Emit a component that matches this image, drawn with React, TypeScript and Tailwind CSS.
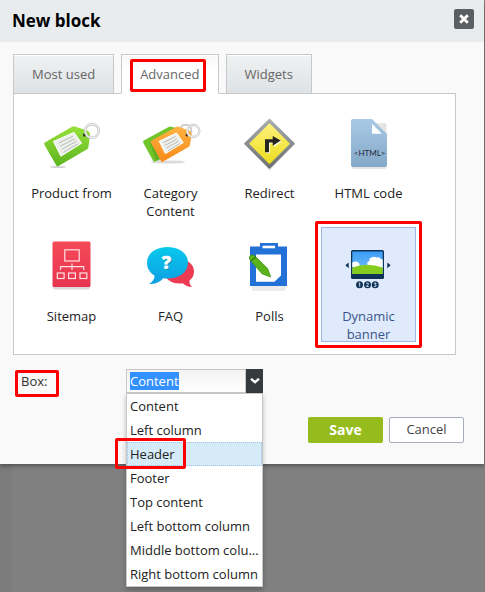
import { ReactNode, useEffect, useRef, useState } from "react";
import { twMerge } from "tailwind-merge";

interface Block {
  name: string;
  icon: ReactNode;
  marked?: boolean;
}

const tabs = ["Most used", "Advanced", "Widgets"];

const boxes = [
  "Content",
  "Left column",
  "Header",
  "Footer",
  "Top content",
  "Left bottom column",
  "Middle bottom colu...",
  "Right bottom column",
];

// --- icons ---

function Icon({ children }: { children: ReactNode }) {
  return (
    <svg
      viewBox="0 0 64 64"
      className="size-16 shrink-0"
      aria-hidden="true"
    >
      {children}
    </svg>
  );
}

function ProductIcon() {
  return (
    <Icon>
      <defs>
        <linearGradient id="tagGreen" x1="0" y1="0" x2="0" y2="1">
          <stop offset="0" stopColor="#97e03a" />
          <stop offset="1" stopColor="#5cb51f" />
        </linearGradient>
      </defs>
      <ellipse cx="18" cy="56" rx="8" ry="1" fill="#000" opacity=".18" />
      <path
        d="M4.8 31.5 32 15.8Q33.5 15 35 15.5L47 19.6Q50.2 21 50 24L48.4 36.2Q48.2 37.6 47 38.3L18.5 55Q17 55.8 16.2 54.3L4.5 34Q3.6 32.4 4.8 31.5Z"
        fill="url(#tagGreen)"
      />
      <path d="M13.5 30.4 34 21.4 41.6 32.2 20.9 45.2Z" fill="#eef0ed" stroke="#fff" />
      <path
        d="M18.5 32.2 33 25.2M20.2 35.3 34.8 27.7M21.8 38.4 36.6 30.2M23.6 41.4 38 32.8"
        stroke="#a9ada9"
        strokeWidth=".8"
        fill="none"
      />
      <circle cx="44.5" cy="24" r="1.7" fill="#29411b" />
      <circle cx="52" cy="20" r="6.8" fill="none" stroke="#c3c3c3" strokeWidth="2.4" />
      <circle cx="52" cy="20" r="6.8" fill="none" stroke="#ededed" strokeWidth="1.2" />
    </Icon>
  );
}

function CategoryIcon() {
  return (
    <Icon>
      <defs>
        <linearGradient id="tagOrange" x1="0" y1="0" x2="0" y2="1">
          <stop offset="0" stopColor="#ffb341" />
          <stop offset="1" stopColor="#f88a1b" />
        </linearGradient>
      </defs>
      <ellipse cx="29" cy="51" rx="17" ry="1.6" fill="#000" opacity=".14" />
      <circle cx="46.5" cy="19.5" r="5.8" fill="none" stroke="#cdcdcd" strokeWidth="2" />
      <path
        d="M4.8 29.6 29.6 16Q31 15.3 32.5 15.8L42 19 40 38 16 50.6Q14.8 51.2 14.2 50L4.4 32Q3.5 30.4 4.8 29.6Z"
        fill="#70c52a"
      />
      <path
        d="M11 32 36 16 37 20 16 34 22 49 17 50Z"
        fill="#4d9e16"
        opacity=".5"
      />
      <path
        d="M12.5 29.6 37 16Q38.4 15.2 39.8 15.8L50 19.4Q53 20.6 52.6 24L50.9 34Q50.7 35.3 49.5 36L24.2 50.6Q22.8 51.4 22 50L12 32Q11.2 30.4 12.5 29.6Z"
        fill="url(#tagOrange)"
      />
      <path d="M20.2 30.2 37.6 22 44.2 31.6 26.4 42.6Z" fill="#eef0ed" stroke="#fff" />
      <path
        d="M24.2 31.8 36.6 25.4M25.8 34.6 38.2 27.8M27.4 37.2 39.8 30M29 39.8 41 32.4"
        stroke="#a9ada9"
        strokeWidth=".8"
        fill="none"
      />
      <circle cx="48" cy="24" r="1.5" fill="#4c3415" />
      <circle cx="54.3" cy="20" r="6" fill="none" stroke="#c3c3c3" strokeWidth="2.4" />
      <circle cx="54.3" cy="20" r="6" fill="none" stroke="#ededed" strokeWidth="1.2" />
    </Icon>
  );
}

function RedirectIcon() {
  return (
    <Icon>
      <defs>
        <linearGradient id="signEdge" x1="0" y1="0" x2="0" y2="1">
          <stop offset="0" stopColor="#a9acae" />
          <stop offset="1" stopColor="#6d7072" />
        </linearGradient>
        <linearGradient id="signFace" x1="0" y1="0" x2="0" y2="1">
          <stop offset="0" stopColor="#fff37c" />
          <stop offset="1" stopColor="#ecdc1e" />
        </linearGradient>
      </defs>
      <path d="M31.5 12 54 35 31.5 60 9 35Z" fill="#000" opacity=".1" />
      <path
        d="M31.5 9 55.5 32.7 31.5 56.5 7.5 32.7Z"
        fill="url(#signEdge)"
        stroke="url(#signEdge)"
        strokeWidth="2.4"
        strokeLinejoin="round"
      />
      <path d="M31.5 12.2 52 32.7 31.5 53.2 11 32.7Z" fill="url(#signFace)" />
      <path d="M28 42.3V29.5H36V26.2L43.7 30.8 36 36V32.5H32V42.3Z" fill="#fff" opacity=".8" />
      <path d="M27 41.3V28.3H34.7V25L42.7 29.6 34.7 34.8V31.6H31V41.3Z" fill="#26251f" />
    </Icon>
  );
}

function HtmlIcon() {
  return (
    <Icon>
      <defs>
        <linearGradient id="page" x1="0" y1="0" x2="0" y2="1">
          <stop offset="0" stopColor="#a9cae6" />
          <stop offset="1" stopColor="#84a8c8" />
        </linearGradient>
      </defs>
      <rect x="15" y="12" width="34.5" height="46" rx="2" fill="#000" opacity=".1" />
      <path
        d="M16 8H35L50 23V54Q50 56 48 56H16Q14 56 14 54V10Q14 8 16 8Z"
        fill="url(#page)"
      />
      <path d="M35 12.7V22.7H44.9Z" fill="#fff" />
      <text
        x="32.7"
        y="45.2"
        textAnchor="middle"
        fontSize="8"
        fill="#1c2c3b"
        className="font-[Lato,sans-serif]"
      >
        &lt;HTML&gt;
      </text>
    </Icon>
  );
}

function SitemapIcon() {
  return (
    <Icon>
      <defs>
        <linearGradient id="sitemapRed" x1="0" y1="0" x2="0" y2="1">
          <stop offset="0" stopColor="#f44a58" />
          <stop offset="1" stopColor="#e93450" />
        </linearGradient>
      </defs>
      <rect x="13" y="10" width="37" height="45.5" rx="2" fill="#000" opacity=".15" />
      <rect x="12.5" y="7.5" width="38" height="45.5" rx="1.5" fill="url(#sitemapRed)" />
      <g fill="none" stroke="#ffe1e3" strokeWidth="1.2">
        <rect x="24.8" y="15.8" width="14.4" height="11.2" />
        <path d="M32 29.5V36M20.5 36V32.7H43.7V36" />
        <rect x="17.3" y="39" width="6.8" height="5.5" />
        <rect x="28.6" y="39" width="6.8" height="5.5" />
        <rect x="40" y="39" width="6.8" height="5.5" />
      </g>
    </Icon>
  );
}

function FaqIcon() {
  return (
    <Icon>
      <defs>
        <linearGradient id="bubble" x1="0" y1="0" x2="0" y2="1">
          <stop offset="0" stopColor="#08c8ec" />
          <stop offset="1" stopColor="#0d9fe2" />
        </linearGradient>
      </defs>
      <path
        d="M39 25C49 25 55 30.5 55 37.5C55 41.5 53.3 44.5 50.5 46.6C50.2 49 51 51.3 53 53C49.5 52.8 46 51.5 43.7 49.2C36 50.6 28 47 26 41.5Z"
        fill="#ec3b52"
      />
      <path
        d="M28.5 13C40.5 13 49 19.5 49 28.7C49 38 40.5 44.5 28.5 44.5C27 44.5 25.5 44.4 24.2 44.2C21 48.2 16 50.3 10.3 50C13.6 47.8 15.4 45 15.6 41.7C10.8 38.8 8 34.2 8 28.7C8 19.5 16.5 13 28.5 13Z"
        fill="url(#bubble)"
      />
      <text
        x="28.5"
        y="36"
        textAnchor="middle"
        fontSize="18"
        fontWeight="800"
        fill="#045d80"
        opacity=".5"
        className="font-['Open_Sans',sans-serif]"
      >
        ?
      </text>
      <text
        x="27.5"
        y="35"
        textAnchor="middle"
        fontSize="18"
        fontWeight="800"
        fill="#fff"
        stroke="#fff"
        strokeWidth=".5"
        className="font-['Open_Sans',sans-serif]"
      >
        ?
      </text>
    </Icon>
  );
}

function PollsIcon() {
  return (
    <Icon>
      <rect x="14" y="16" width="34" height="41" rx="2" fill="#000" opacity=".08" />
      <path d="M12 12.5H22V9H40V12.5H49V52H12Z" fill="#2171d6" />
      <path d="M24.5 11.7H37V14.3H24.5Z" fill="#fff" />
      <path d="M18 20.5H43V41.5L36.5 47.8H18Z" fill="#fff" />
      <path
        d="M11.6 25.2Q10.8 22.6 12.8 21.4Q15 20.3 17 22.2L29.6 34.4 32.7 43 24 39.8 13.8 28Z"
        fill="#5bb51b"
        stroke="#3f8f12"
        strokeWidth=".8"
        strokeLinejoin="round"
      />
      <path d="M13 27 18 22.8" stroke="#2f7a0c" strokeWidth="1.2" />
      <path d="M17 28.6 26.6 38.6M19.5 27 29 36.6" stroke="#48a013" strokeWidth=".6" />
    </Icon>
  );
}

function BannerIcon() {
  return (
    <Icon>
      <defs>
        <linearGradient id="sky" x1="0" y1="0" x2="0" y2="1">
          <stop offset="0" stopColor="#3a9cf5" />
          <stop offset="1" stopColor="#7fc4fb" />
        </linearGradient>
      </defs>
      <rect x="14" y="16" width="33" height="29" rx="1.5" fill="#0f3358" />
      <rect x="15.3" y="17.5" width="30.4" height="22.5" fill="url(#sky)" />
      <path
        d="M30.5 31Q29.5 27.5 32.5 27Q31.8 23.5 35 23.5Q37 21.8 39.5 23.5Q43 22.5 43.5 25L45.7 25.5V34H30.5ZM15.3 28.5Q20.5 25.8 22.5 30V33H15.3Z"
        fill="#fff"
      />
      <path d="M15.3 33.5Q30 28 45.7 33.5V40H15.3Z" fill="#84cc1d" />
      <path d="M8.3 31.3 11.7 28.5V34.3ZM53.7 31.3 50.3 28.5V34.3Z" fill="#0f3358" />
      <g fill="#0f3358">
        <circle cx="22.5" cy="50.7" r="3.5" />
        <circle cx="30.5" cy="50.7" r="3.5" />
        <circle cx="38.2" cy="50.7" r="3.5" />
      </g>
      <path
        d="M21.8 49.4 22.7 48.8V52.8M29.3 49.3Q32 48.3 31.3 50.3L29.3 52.4H31.8M37 49.1H39.2L38 50.5Q40 51 38.8 52.3L37 52.5"
        stroke="#dfebfd"
        strokeWidth=".9"
        fill="none"
      />
    </Icon>
  );
}

const blocks: Block[] = [
  { name: "Product from", icon: <ProductIcon /> },
  { name: "Category Content", icon: <CategoryIcon /> },
  { name: "Redirect", icon: <RedirectIcon /> },
  { name: "HTML code", icon: <HtmlIcon /> },
  { name: "Sitemap", icon: <SitemapIcon /> },
  { name: "FAQ", icon: <FaqIcon /> },
  { name: "Polls", icon: <PollsIcon /> },
  { name: "Dynamic banner", icon: <BannerIcon />, marked: true },
];

// red frame that points out a step
function Marker({ className }: { className?: string }) {
  return (
    <span
      className={twMerge(
        "pointer-events-none absolute z-20 rounded-[2px] border-3 border-[#ff0000]",
        className,
      )}
    />
  );
}

function Tabs({ active, onChange }: { active: string; onChange: (tab: string) => void }) {
  return (
    <div
      role="tablist"
      className="flex gap-[7px]"
    >
      {tabs.map((tab) => (
        <button
          key={tab}
          type="button"
          role="tab"
          aria-selected={tab === active}
          onClick={() => onChange(tab)}
          className={twMerge(
            "relative h-10 border border-[#c8c8c8] bg-linear-to-b from-[#eff1f2] to-[#dfe3e5] px-[18px] pt-0.5 text-[#666666] shadow-[inset_0_1px_0_#ffffff]",
            tab === active && "z-10 border-b-white from-[#f6f6f6] to-white to-40%",
          )}
        >
          {tab}
          {tab === "Advanced" && <Marker className="top-1 right-3 bottom-px left-2" />}
        </button>
      ))}
    </div>
  );
}

function BlockGrid({ selected, onSelect }: { selected: string; onSelect: (name: string) => void }) {
  return (
    <div className="-mt-px border border-[#c8c8c8] bg-white px-2.5 pt-2.5 pb-3">
      <div className="flex flex-wrap gap-x-1 gap-y-2">
        {blocks.map(({ name, icon, marked }) => (
          <button
            key={name}
            type="button"
            aria-pressed={name === selected}
            onClick={() => onSelect(name)}
            className={twMerge(
              "relative flex h-[115px] w-[95px] flex-col items-center gap-[9px] border border-transparent px-1 pt-1.5 leading-[18px] text-[#222222]",
              name === selected && "border-[#9db8e6] bg-[#dfebfd] text-[#3a5488]",
            )}
          >
            {icon}
            <span>{name}</span>
            {marked && <Marker className="-inset-[7px]" />}
          </button>
        ))}
      </div>
    </div>
  );
}

function BoxSelect() {
  const inputRef = useRef<HTMLInputElement>(null);
  const [value, setValue] = useState("Content");
  const [hovered, setHovered] = useState("Header");
  const [open, setOpen] = useState(true);

  useEffect(function selectValueOnOpen() {
    inputRef.current?.focus();
    inputRef.current?.select();
  }, []);

  function handlePick(box: string) {
    setValue(box);
    setOpen(false);
  }

  return (
    <div className="relative flex h-6 w-[137px]">
      <input
        ref={inputRef}
        id="box"
        role="combobox"
        aria-expanded={open}
        aria-controls="box-list"
        value={value}
        onChange={(e) => setValue(e.target.value)}
        className="min-w-0 flex-1 border border-[#c8c8c8] bg-linear-to-b from-[#f3f3f3] to-white px-[3px] leading-[18px] text-[#222222] outline-none selection:bg-[#3390ff] selection:text-white"
      />
      <button
        type="button"
        aria-label="Show boxes"
        onClick={() => setOpen(!open)}
        className="flex w-[17px] items-center justify-center bg-[#353a3e]"
      >
        <svg
          viewBox="0 0 10 6"
          className="h-1.5 w-2.5"
        >
          <path d="M1 .8 5 4.2 9 .8" fill="none" stroke="#fff" strokeWidth="2.4" />
        </svg>
      </button>
      {open && (
        <ul
          id="box-list"
          role="listbox"
          aria-label="Box"
          className="absolute inset-x-0 top-6 z-10 border border-[#c8c8c8] bg-white shadow-[0_3px_5px_rgba(0,0,0,0.25)]"
        >
          {boxes.map((box) => (
            <li
              key={box}
              role="option"
              aria-selected={box === value}
              onMouseEnter={() => setHovered(box)}
              onClick={() => handlePick(box)}
              className={twMerge(
                "relative h-6 border border-transparent px-0.5 leading-[22px] whitespace-nowrap text-[#222222]",
                box === hovered && "border-dotted border-[#9bbfe0] bg-[#d5ecf8]",
              )}
            >
              {box}
              {box === "Header" && <Marker className="-top-[5px] -bottom-1 -left-[13px] w-[71px]" />}
            </li>
          ))}
        </ul>
      )}
    </div>
  );
}

export default function App() {
  const [tab, setTab] = useState("Advanced");
  const [selected, setSelected] = useState("Dynamic banner");

  return (
    <div className="min-h-screen bg-[#808080] bg-linear-to-r from-[#7b7b7b] from-[11px] to-transparent to-[12px] pr-px font-['Open_Sans',sans-serif] text-[13px]">
      <section
        role="dialog"
        aria-labelledby="dialog-title"
        className="bg-[#f9f9f9] shadow-[0_2px_4px_rgba(0,0,0,0.35)]"
      >
        <header className="flex h-[42px] items-center justify-between bg-[#e8ecef] pr-2.5 pl-3">
          <h1
            id="dialog-title"
            className="text-[17px] font-bold text-black"
          >
            New block
          </h1>
          <button
            type="button"
            aria-label="Close"
            className="mb-1 flex size-5 items-center justify-center rounded-[2px] bg-[#5a5f63]"
          >
            <svg
              viewBox="0 0 10 10"
              className="size-2.5"
            >
              <path d="M1.2 1.2 8.8 8.8M8.8 1.2 1.2 8.8" stroke="#fff" strokeWidth="2.8" />
            </svg>
          </button>
        </header>

        <div className="pt-3 pr-7 pl-[13px]">
          <Tabs
            active={tab}
            onChange={setTab}
          />
          <BlockGrid
            selected={selected}
            onSelect={setSelected}
          />
        </div>

        <div className="flex items-center pt-3.5 pl-[15px]">
          <div className="w-[111px]">
            <label
              htmlFor="box"
              className="relative block h-6 w-11 px-1.5 leading-6 text-[#333333]"
            >
              Box:
              <Marker className="inset-x-0 top-px -bottom-1" />
            </label>
          </div>
          <BoxSelect />
        </div>

        <footer className="flex justify-end gap-1.5 pt-6 pr-5 pb-[21px]">
          <button
            type="button"
            className="h-[26px] w-[75px] rounded-[2px] bg-[#95bc1c] text-sm font-bold text-white"
          >
            Save
          </button>
          <button
            type="button"
            className="h-[26px] w-[75px] rounded-[2px] border border-[#a3abbd] bg-white text-[#444444]"
          >
            Cancel
          </button>
        </footer>
      </section>
    </div>
  );
}
